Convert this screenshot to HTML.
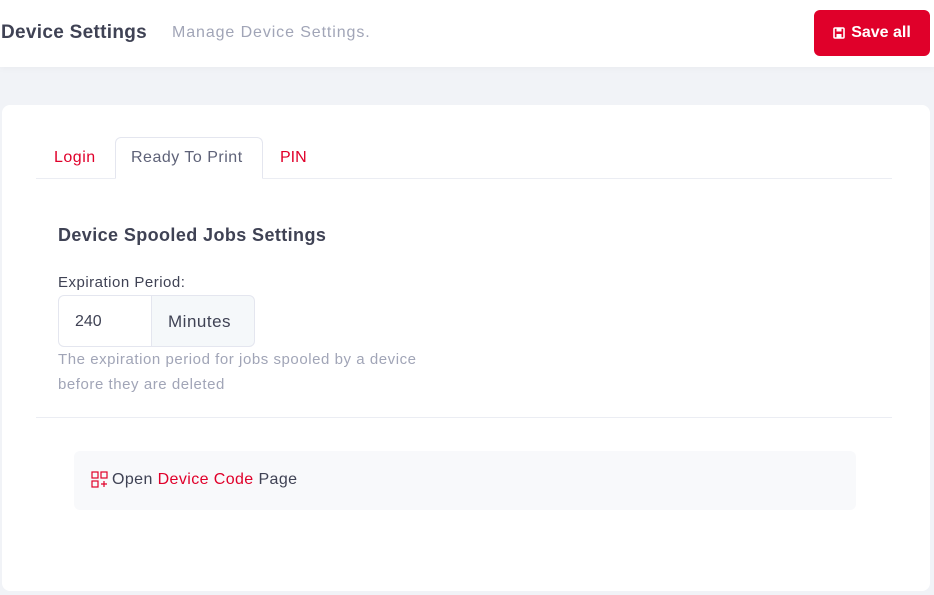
<!DOCTYPE html>
<html><head><style>
*{margin:0;padding:0;box-sizing:border-box}
body{width:934px;height:595px;overflow:hidden;background:#f1f3f7;font-family:"Liberation Sans",sans-serif;position:relative}
.hdr{position:absolute;left:0;top:0;width:934px;height:67px;background:#fff;box-shadow:0 2px 6px rgba(0,0,0,.03)}
.t1{position:absolute;left:1px;top:22px;font-size:19px;font-weight:bold;color:#3f4254;letter-spacing:0.3px}
.t2{position:absolute;left:172px;top:24px;font-size:16px;color:#a1a5b7;letter-spacing:0.9px}
.btn{position:absolute;left:814px;top:10px;width:116px;height:46px;background:#e0002a;border-radius:6px;color:#fff;font-weight:bold;font-size:16px;display:flex;align-items:center;justify-content:center;gap:6px}
.card{position:absolute;left:2px;top:105px;width:928px;height:486px;background:#fff;border-radius:8px}
.abs{position:absolute}
</style></head><body>
<div class="hdr">
<div class="t1">Device Settings</div>
<div class="t2">Manage Device Settings.</div>
<div class="btn"><svg width="12" height="12" viewBox="0 0 12 12"><rect x="1" y="1" width="10" height="10" rx="1" fill="none" stroke="#fff" stroke-width="1.6"/><rect x="3.5" y="1" width="5" height="3.5" fill="#fff"/><rect x="3.5" y="7" width="5" height="4" fill="#fff"/></svg>Save all</div>
</div>
<div class="card"></div>
<div class="abs" style="left:36px;top:178px;width:856px;height:1px;background:#ebedf3"></div>
<div class="abs" style="left:115px;top:137px;width:148px;height:42px;border:1px solid #e4e6ef;border-bottom:1px solid #fff;border-radius:6px 6px 0 0;background:#fff"></div>
<div class="abs" style="left:54px;top:149px;font-size:16px;color:#e0002a;letter-spacing:0.5px">Login</div>
<div class="abs" style="left:131px;top:149px;font-size:16px;color:#5e6278;letter-spacing:0.5px">Ready To Print</div>
<div class="abs" style="left:280px;top:149px;font-size:16px;color:#e0002a">PIN</div>
<div class="abs" style="left:58px;top:225px;font-size:18px;font-weight:bold;color:#3f4254;letter-spacing:0.4px">Device Spooled Jobs Settings</div>
<div class="abs" style="left:58px;top:274px;font-size:15px;color:#3f4254;letter-spacing:0.5px">Expiration Period:</div>
<div class="abs" style="left:58px;top:295px;width:94px;height:52px;border:1px solid #e4e6ef;border-radius:6px 0 0 6px;font-size:16px;color:#3f4254;padding:17px 0 0 16px">240</div>
<div class="abs" style="left:151px;top:295px;width:104px;height:52px;border:1px solid #e4e6ef;border-radius:0 6px 6px 0;background:#f5f8fa;font-size:17px;color:#3f4254;padding:16px 0 0 16px;letter-spacing:0.5px">Minutes</div>
<div class="abs" style="left:58px;top:347px;font-size:15px;line-height:25px;color:#a1a5b7;letter-spacing:0.55px">The expiration period for jobs spooled by a device<br>before they are deleted</div>
<div class="abs" style="left:36px;top:417px;width:856px;height:1px;background:#ebedf3"></div>
<div class="abs" style="left:74px;top:451px;width:782px;height:59px;background:#f8f9fb;border-radius:6px"></div>
<svg class="abs" style="left:91px;top:471px" width="17" height="17" viewBox="0 0 17 17" fill="none" stroke="#e0002a" stroke-width="1.2"><rect x="1" y="1" width="6" height="6"/><rect x="10" y="1" width="6" height="6"/><rect x="1" y="10" width="6" height="6"/><path d="M10 13h6M13 10v6"/></svg>
<div class="abs" style="left:112px;top:471px;font-size:16px;color:#3f4254;letter-spacing:0.4px">Open <span style="color:#e0002a">Device Code</span> Page</div>
</body></html>
